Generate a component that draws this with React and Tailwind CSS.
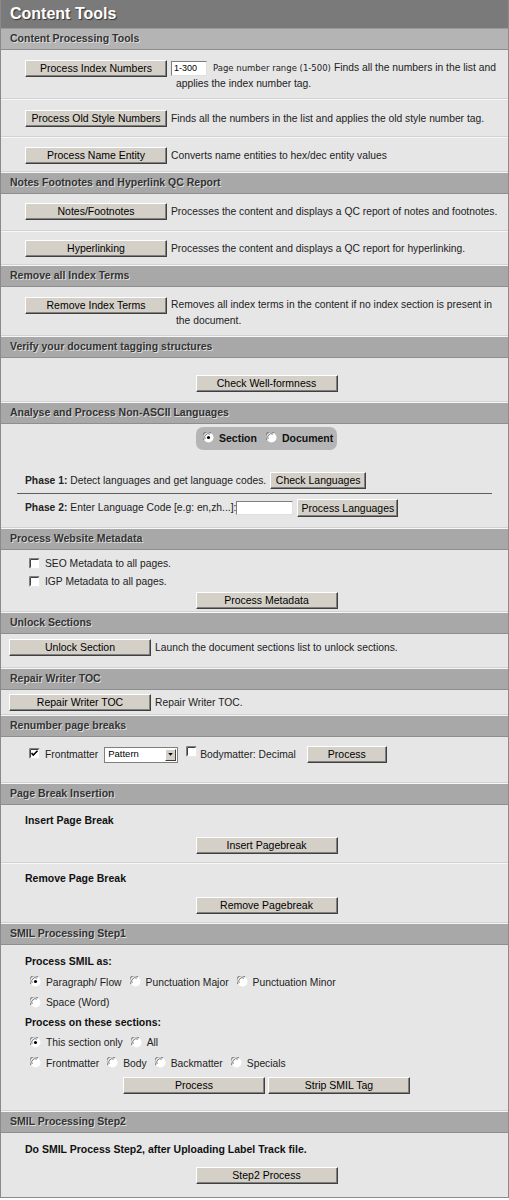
import React from 'react'

function Btn({ w = 'w-[142px]', h = 'h-[17px]', children }) {
	return (
		<button
			type="button"
			className={`${w} ${h} shrink-0 border border-t-[#ffffff] border-l-[#ffffff] border-r-[#404040] border-b-[#404040] bg-[#d4d0c8] text-[10.5px] leading-none text-black shadow-[inset_-1px_-1px_0_#808080]`}
		>
			{children}
		</button>
	)
}

function Sep() {
	return <div className="h-[2px] border-t border-[#d2d2d2] bg-[#f7f7f7]" />
}

function Header({ children, light = false }) {
	return (
		<div
			className={`flex h-[21px] items-center border-b border-[#8e8e8e] px-[9px] text-[10.5px] font-bold text-[#333333] [text-shadow:1px_1px_0_#dedede] ${light ? 'bg-[#b4b4b4]' : 'bg-[#a8a8a8]'}`}
		>
			{children}
		</div>
	)
}

function Radio({ checked = false }) {
	return (
		<svg width="11" height="11" viewBox="0 0 12 12" className="mr-[5px] shrink-0 -translate-y-[1px]">
			<circle cx="6" cy="6" r="5.5" fill="#ffffff" />
			<path d="M1.2 8.6 A5 5 0 0 1 8.6 1.2" fill="none" stroke="#808080" strokeWidth="1.2" />
			<path d="M2.4 7.6 A3.8 3.8 0 0 1 7.6 2.4" fill="none" stroke="#404040" strokeWidth="0.8" />
			{checked && <circle cx="6" cy="6" r="1.7" fill="#000000" />}
		</svg>
	)
}

function Check({ checked = false, lift = false }) {
	return (
		<svg width="11" height="11" viewBox="0 0 11 11" className={`shrink-0 ${lift ? '-translate-y-[3px]' : '-translate-y-[1px]'}`}>
			<rect x="0" y="0" width="11" height="11" fill="#ffffff" />
			<path d="M0.5 10.5 V0.5 H10.5" fill="none" stroke="#808080" />
			<path d="M1.5 9.5 V1.5 H9.5" fill="none" stroke="#404040" />
			<path d="M10.5 0.5 V10.5 H0.5" fill="none" stroke="#e8e8e8" />
			{checked && <path d="M2.5 5 L4.3 7 L8.5 2.8" fill="none" stroke="#000000" strokeWidth="1.6" />}
		</svg>
	)
}

function Opt({ checked = false, children }) {
	return (
		<span className="mr-[8px] inline-flex items-center">
			<Radio checked={checked} />
			<span>{children}</span>
		</span>
	)
}

export default function App() {
	return (
		<div className="w-[509px] border-x border-b border-[#8a8a8a] bg-[#e6e6e6] font-['Liberation_Sans',Arial,sans-serif] text-[10.3px] text-[#222222]">
			<div className="flex h-[29px] items-center border-b border-[#9a9a9a] bg-[#7a7a7a] px-[9px] text-[16px] font-bold text-white [text-shadow:1px_1px_1px_#333333]">
				Content Tools
			</div>

			<Header light>Content Processing Tools</Header>
			<div className="flex pb-[6px] pl-[24px] pt-[10px]">
				<Btn>Process Index Numbers</Btn>
				<div className="ml-[4px] leading-[16px]">
					<div className="flex items-center">
						<span className="flex h-[15px] w-[36px] items-center border border-t-[#7f7f7f] border-l-[#7f7f7f] border-r-[#e0e0e0] border-b-[#e0e0e0] bg-white pl-[2px] text-[9px] text-black">
							1-300
						</span>
						<span className="ml-[6px] font-['DejaVu_Sans',sans-serif] text-[8.5px]">Page number range (1-500)</span>
						<span className="ml-[3px]">Finds all the numbers in the list and</span>
					</div>
					<div className="pl-[5px]">applies the index number tag.</div>
				</div>
			</div>
			<Sep />
			<div className="flex items-center pb-[9px] pl-[24px] pt-[10px]">
				<Btn>Process Old Style Numbers</Btn>
				<span className="ml-[4px]">Finds all the numbers in the list and applies the old style number tag.</span>
			</div>
			<Sep />
			<div className="flex items-center pb-[7px] pl-[24px] pt-[9px]">
				<Btn>Process Name Entity</Btn>
				<span className="ml-[4px]">Converts name entities to hex/dec entity values</span>
			</div>
			<Sep />

			<Header>Notes Footnotes and Hyperlink QC Report</Header>
			<div className="flex items-center pb-[10px] pl-[24px] pt-[9px]">
				<Btn>Notes/Footnotes</Btn>
				<span className="ml-[4px]">Processes the content and displays a QC report of notes and footnotes.</span>
			</div>
			<Sep />
			<div className="flex items-center pb-[7px] pl-[24px] pt-[8px]">
				<Btn>Hyperlinking</Btn>
				<span className="ml-[4px]">Processes the content and displays a QC report for hyperlinking.</span>
			</div>
			<Sep />

			<Header>Remove all Index Terms</Header>
			<div className="flex pb-[6px] pl-[24px] pt-[10px]">
				<Btn>Remove Index Terms</Btn>
				<div className="ml-[4px] leading-[16px]">
					<div>Removes all index terms in the content if no index section is present in</div>
					<div className="pl-[5px]">the document.</div>
				</div>
			</div>
			<Sep />

			<Header>Verify your document tagging structures</Header>
			<div className="flex justify-center pb-[9px] pl-[24px] pt-[17px]">
				<Btn>Check Well-formness</Btn>
			</div>
			<Sep />

			<Header>Analyse and Process Non-ASCII Languages</Header>
			<div className="pb-[10px] pt-[3px]">
				<div className="flex justify-center pl-[24px]">
					<div className="flex h-[23px] w-[141px] items-center rounded-[7px] bg-[#b5b5b5] pl-[7px] text-[10.5px] font-bold text-[#111111]">
						<Radio checked />
						<span className="mr-[9px]">Section</span>
						<Radio />
						<span>Document</span>
					</div>
				</div>
				<div className="mt-[21px] flex h-[19px] items-center pl-[24px]">
					<b className="mr-[3px]">Phase 1:</b>
					<span>Detect languages and get language codes.</span>
					<span className="ml-[4px]">
						<Btn w="w-[96px]">Check Languages</Btn>
					</span>
				</div>
				<div className="mx-[16px] mt-[3px] border-t border-[#5e5e5e]" />
				<div className="mt-[5px] flex h-[18px] items-center pl-[24px]">
					<b className="mr-[3px]">Phase 2:</b>
					<span>Enter Language Code [e.g: en,zh...]:</span>
					<span className="h-[14px] w-[57px] border border-t-[#7f7f7f] border-l-[#7f7f7f] border-r-[#e0e0e0] border-b-[#e0e0e0] bg-white" />
					<span className="ml-[4px]">
						<Btn w="w-[101px]" h="h-[18px]">Process Languages</Btn>
					</span>
				</div>
			</div>
			<Sep />

			<Header>Process Website Metadata</Header>
			<div className="pb-[2px] pt-[6px]">
				<div className="flex h-[16px] items-center pl-[28px]">
					<Check />
					<span className="ml-[5px]">SEO Metadata to all pages.</span>
				</div>
				<div className="mt-[2px] flex h-[16px] items-center pl-[28px]">
					<Check />
					<span className="ml-[5px]">IGP Metadata to all pages.</span>
				</div>
				<div className="mt-[2px] flex justify-center pl-[24px]">
					<Btn>Process Metadata</Btn>
				</div>
			</div>
			<Sep />

			<Header>Unlock Sections</Header>
			<div className="flex items-center pb-[11px] pl-[8px] pt-[5px]">
				<Btn>Unlock Section</Btn>
				<span className="ml-[4px]">Launch the document sections list to unlock sections.</span>
			</div>
			<Sep />

			<Header>Repair Writer TOC</Header>
			<div className="flex items-center pb-[3px] pl-[8px] pt-[4px]">
				<Btn>Repair Writer TOC</Btn>
				<span className="ml-[4px]">Repair Writer TOC.</span>
			</div>
			<Sep />

			<Header>Renumber page breaks</Header>
			<div className="flex items-center pb-[19px] pl-[28px] pt-[9px]">
				<Check checked />
				<span className="ml-[5px]">Frontmatter</span>
				<div className="ml-[6px] flex h-[16px] w-[74px] items-center border border-[#7f7f7f] bg-white">
					<span className="flex-1 pl-[3px] text-[9.5px] text-black">Pattern</span>
					<span className="mr-[1px] flex h-[12px] w-[11px] items-center justify-center border border-t-[#ffffff] border-l-[#ffffff] border-r-[#404040] border-b-[#404040] bg-[#d4d0c8]">
						<svg width="5" height="3" viewBox="0 0 6 4">
							<path d="M0 0 H6 L3 3.5 Z" fill="#000000" />
						</svg>
					</span>
				</div>
				<span className="ml-[8px]">
					<Check lift />
				</span>
				<span className="ml-[3px]">Bodymatter: Decimal</span>
				<span className="ml-[11px]">
					<Btn w="w-[80px]">Process</Btn>
				</span>
			</div>
			<Sep />

			<Header>Page Break Insertion</Header>
			<div className="pb-[8px] pt-[9px]">
				<div className="flex h-[14px] items-center pl-[24px] text-[10.5px] font-bold text-[#111111]">Insert Page Break</div>
				<div className="mt-[9px] flex justify-center pl-[24px]">
					<Btn>Insert Pagebreak</Btn>
				</div>
			</div>
			<Sep />
			<div className="pb-[8px] pt-[8px]">
				<div className="flex h-[14px] items-center pl-[24px] text-[10.5px] font-bold text-[#111111]">Remove Page Break</div>
				<div className="mt-[11px] flex justify-center pl-[24px]">
					<Btn>Remove Pagebreak</Btn>
				</div>
			</div>
			<Sep />

			<Header>SMIL Processing Step1</Header>
			<div className="pb-[16px] pt-[7px]">
				<div className="flex h-[20px] items-center pl-[24px] text-[10.5px] font-bold text-[#111111]">Process SMIL as:</div>
				<div className="flex h-[21px] items-center pl-[29px]">
					<Opt checked>Paragraph/ Flow</Opt>
					<Opt>Punctuation Major</Opt>
					<Opt>Punctuation Minor</Opt>
				</div>
				<div className="flex h-[20px] items-center pl-[29px]">
					<Opt>Space (Word)</Opt>
				</div>
				<div className="flex h-[20px] items-center pl-[24px] text-[10.5px] font-bold text-[#111111]">Process on these sections:</div>
				<div className="flex h-[20px] items-center pl-[29px]">
					<Opt checked>This section only</Opt>
					<Opt>All</Opt>
				</div>
				<div className="flex h-[21px] items-center pl-[29px]">
					<Opt>Frontmatter</Opt>
					<Opt>Body</Opt>
					<Opt>Backmatter</Opt>
					<Opt>Specials</Opt>
				</div>
				<div className="mt-[3px] flex justify-center gap-[3px] pl-[24px]">
					<Btn>Process</Btn>
					<Btn>Strip SMIL Tag</Btn>
				</div>
			</div>
			<Sep />

			<Header>SMIL Processing Step2</Header>
			<div className="pb-[13px] pt-[7px]">
				<div className="flex h-[20px] items-center pl-[24px] text-[10.5px] font-bold text-[#111111]">
					Do SMIL Process Step2, after Uploading Label Track file.
				</div>
				<div className="mt-[7px] flex justify-center pl-[24px]">
					<Btn>Step2 Process</Btn>
				</div>
			</div>
		</div>
	)
}
